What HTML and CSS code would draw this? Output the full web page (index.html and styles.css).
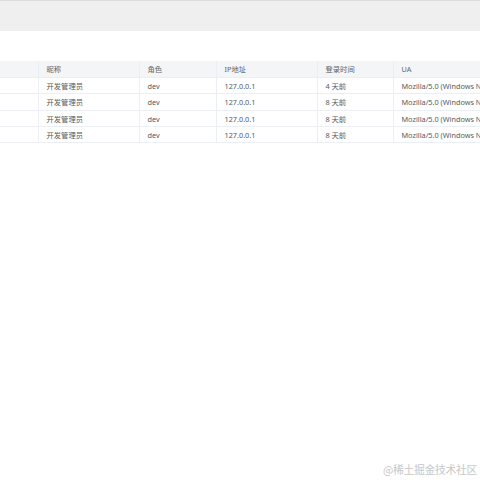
FILE: index.html
```html
<!DOCTYPE html>
<html lang="zh">
<head>
<meta charset="utf-8">
<link rel="stylesheet" href="styles.css">
</head>
<body>
<div class="topbar"></div>
<div class="table-wrap">
  <table class="grid">
    <colgroup>
      <col class="c0"><col class="c1"><col class="c2"><col class="c3"><col class="c4"><col class="c5">
    </colgroup>
    <thead>
      <tr><th></th><th>昵称</th><th>角色</th><th>IP地址</th><th>登录时间</th><th>UA</th></tr>
    </thead>
    <tbody>
      <tr><td></td><td>开发管理员</td><td>dev</td><td>127.0.0.1</td><td>4 天前</td><td>Mozilla/5.0 (Windows NT 10.0; Win64; x64)</td></tr>
      <tr><td></td><td>开发管理员</td><td>dev</td><td>127.0.0.1</td><td>8 天前</td><td>Mozilla/5.0 (Windows NT 10.0; Win64; x64)</td></tr>
      <tr><td></td><td>开发管理员</td><td>dev</td><td>127.0.0.1</td><td>8 天前</td><td>Mozilla/5.0 (Windows NT 10.0; Win64; x64)</td></tr>
      <tr><td></td><td>开发管理员</td><td>dev</td><td>127.0.0.1</td><td>8 天前</td><td>Mozilla/5.0 (Windows NT 10.0; Win64; x64)</td></tr>
    </tbody>
  </table>
</div>
<div class="watermark">@稀土掘金技术社区</div>
</body>
</html>
```
FILE: styles.css
```css
html, body {
  margin: 0;
  padding: 0;
  background: #ffffff;
  width: 480px;
  height: 480px;
  overflow: hidden;
  position: relative;
  font-family: "Noto Sans", "Noto Sans CJK SC", sans-serif;
}
.topbar {
  height: 30px;
  background: #efefef;
  border-top: 1px solid #dcdcdc;
}
.table-wrap {
  margin-top: 30px;
  width: 480px;
  overflow: hidden;
}
.grid {
  border-collapse: collapse;
  table-layout: fixed;
  width: 700px;
  font-size: 7.3px;
  color: #555a60;
}
.c0 { width: 38px; }
.c1 { width: 101px; }
.c2 { width: 77px; }
.c3 { width: 101px; }
.c4 { width: 76px; }
.c5 { width: 307px; }
.grid th, .grid td {
  text-align: left;
  font-weight: normal;
  padding: 0 0 0 8px;
  height: 15px;
  line-height: 12px;
  white-space: nowrap;
  overflow: hidden;
  border-bottom: 1px solid #ebeef2;
  border-left: 1px solid #ebeef2;
}
.grid tbody tr:nth-child(2) td { height: 16px; }
.grid th:first-child, .grid td:first-child { border-left: none; }
.grid thead th {
  background: #f4f5f7;
  color: #5f6368;
  height: 16px;
}
.watermark {
  position: absolute;
  right: 3px;
  bottom: 3px;
  font-family: "Noto Sans CJK SC", sans-serif;
  font-size: 10.8px;
  color: #c8c8c8;
  letter-spacing: -0.3px;
}
```
